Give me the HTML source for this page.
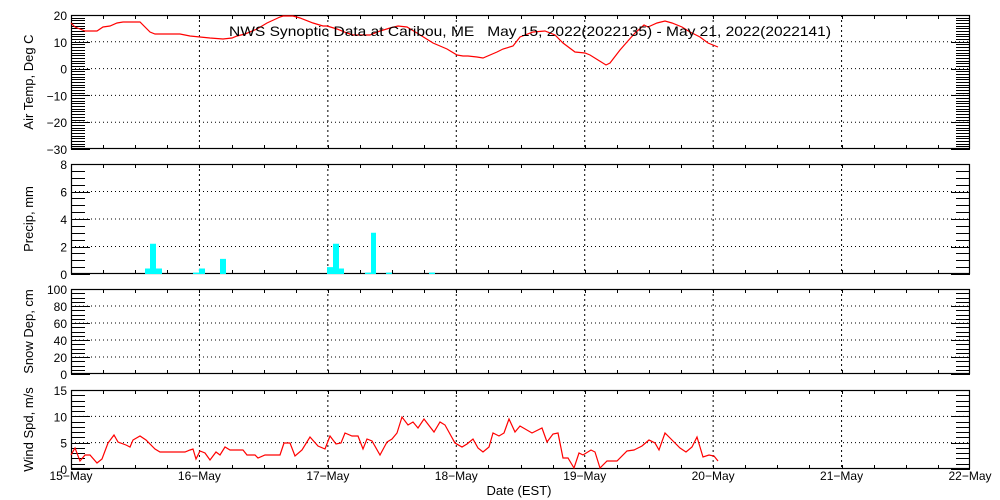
<!DOCTYPE html>
<html><head><meta charset="utf-8"><style>
html,body{margin:0;padding:0;background:#fff;width:1000px;height:500px;overflow:hidden}
svg{display:block;font-family:"Liberation Sans",sans-serif}
</style></head><body>
<svg id="s" width="1000" height="500" viewBox="0 0 1000 500" xmlns="http://www.w3.org/2000/svg">
<rect width="1000" height="500" fill="#fff"/>
<g id="g"></g>
<text x="229" y="36" font-size="14" textLength="602" lengthAdjust="spacingAndGlyphs">NWS Synoptic Data at Caribou, ME&#160;&#160;&#160;May 15, 2022(2022135) - May 21, 2022(2022141)</text>
</svg>
<script>
const NS="http://www.w3.org/2000/svg",g=document.getElementById('g');
function el(t,a,txt){const e=document.createElementNS(NS,t);for(const k in a)e.setAttribute(k,a[k]);if(txt!==undefined)e.textContent=txt;g.appendChild(e);return e;}
const L=71,R=970,DW=(R-L)/7;
const panels=[
 {top:15,bot:149,min:-30,max:20,maj:10,minr:1,title:"Air Temp, Deg C",labs:[-30,-20,-10,0,10,20]},
 {top:164,bot:274,min:0,max:8,maj:2,minr:0.5,title:"Precip, mm",labs:[0,2,4,6,8]},
 {top:289,bot:374,min:0,max:100,maj:20,minr:5,title:"Snow Dep, cm",labs:[0,20,40,60,80,100]},
 {top:390,bot:469,min:0,max:15,maj:5,minr:1,title:"Wind Spd, m/s",labs:[0,5,10,15]}
];
panels.forEach(p=>{
 const Y=v=>p.bot-(v-p.min)/(p.max-p.min)*(p.bot-p.top);
 for(let d=1;d<7;d++){const x=L+d*DW;el('line',{x1:x,x2:x,y1:p.top,y2:p.bot,stroke:'#000','stroke-width':1,'stroke-dasharray':'2,3'});}
 p.labs.forEach(v=>{if(v>p.min&&v<p.max){const y=Y(v);el('line',{x1:L,x2:R,y1:y,y2:y,stroke:'#000','stroke-width':1,'stroke-dasharray':'1,3'});}});
 for(let v=p.min;v<=p.max+1e-9;v+=p.minr){const y=Math.round(Y(v))+0.5;
  const isMaj=Math.abs(v/p.maj-Math.round(v/p.maj))<1e-6;
  const len=isMaj?19:14;
  el('line',{x1:L,x2:L+len,y1:y,y2:y,stroke:'#000','stroke-width':1});
  el('line',{x1:R-len,x2:R,y1:y,y2:y,stroke:'#000','stroke-width':1});}
 for(let i=1;i<28;i++){const x=Math.round(L+i*DW/4)+0.5;el('line',{x1:x,x2:x,y1:p.top,y2:p.top+4,stroke:'#000'});el('line',{x1:x,x2:x,y1:p.bot-4,y2:p.bot,stroke:'#000'});}
 el('rect',{x:L+0.5,y:p.top+0.5,width:R-L-1,height:p.bot-p.top-1,fill:'none',stroke:'#000','stroke-width':1.2});
 p.labs.forEach(v=>{el('text',{x:67,y:Y(v)+5,'font-size':12,'text-anchor':'end'},(v<0?'\u2212'+(-v):''+v));});
 const cy=(p.top+p.bot)/2;
 el('text',{x:0,y:0,'font-size':13,'text-anchor':'middle',transform:`translate(33,${cy}) rotate(-90)`},p.title);
});
const PB=274,PS=13.75;
[[145,150,0.4],[150,156,2.2],[156,162,0.4],[193,199,0.1],[199,205,0.4],[220,226,1.1],[327,333,0.5],[333,339,2.2],[339,344,0.4],[365,371,0.1],[371,376,3.0],[386,392,0.1],[429,435,0.1]].forEach(b=>{
 el('rect',{x:b[0],y:PB-b[2]*PS,width:b[1]-b[0],height:b[2]*PS,fill:'#00ffff'});});
const tp=[[71,23],[75,27],[85,31],[97,31],[103,27],[110,26],[117,23],[123,22],[140,22],[150,32],[155,34],[180,34],[190,36],[200,37],[210,38],[223,39],[232,38],[237,36],[245,34],[257,29],[267,23],[280,17],[283,16],[293,16],[300,18],[313,23],[323,26],[327,26],[337,29],[347,33],[353,35],[370,35],[380,31],[390,28],[398,26],[407,27],[417,33],[433,43],[447,49],[457,55],[463,56],[468,56],[477,57],[483,58],[497,52],[503,49],[513,46],[520,37],[533,32],[545,31],[555,35],[563,43],[575,52],[585,53],[590,55],[598,60],[606,65],[610,63],[620,50],[627,42],[635,33],[644,25],[648,27],[657,23],[665,21],[672,23],[682,27],[690,32],[700,37],[708,43],[718,47]];
el('polyline',{points:tp.map(p=>p.join(',')).join(' '),fill:'none',stroke:'#ff0000','stroke-width':1.2});
const wp=[[71,455],[75,448],[80,461],[85,455],[90,455],[97,463],[102,459],[108,443],[114,435],[118,442],[126,445],[130,447],[133,440],[140,436],[146,440],[155,449],[160,452],[185,452],[190,450],[193,449],[196,459],[200,451],[205,453],[210,460],[216,452],[220,455],[225,447],[230,450],[243,450],[247,455],[255,455],[258,458],[265,455],[280,455],[284,443],[290,443],[295,456],[302,450],[310,437],[318,446],[325,449],[330,436],[336,444],[341,443],[345,433],[352,436],[358,436],[363,449],[367,439],[372,441],[380,455],[387,442],[392,439],[397,433],[402,417],[408,425],[413,422],[418,428],[424,419],[434,432],[440,422],[445,425],[455,443],[462,447],[467,444],[473,439],[478,448],[483,452],[489,447],[493,433],[499,436],[504,433],[509,419],[515,432],[520,426],[532,433],[542,428],[547,442],[553,434],[558,433],[563,458],[568,458],[574,468],[579,453],[583,455],[591,450],[595,452],[600,468],[607,461],[617,461],[627,451],[634,450],[642,446],[649,440],[655,443],[659,450],[665,433],[672,440],[680,448],[686,452],[692,447],[697,437],[703,457],[709,455],[714,456],[718,461]];
el('polyline',{points:wp.map(p=>p.join(',')).join(' '),fill:'none',stroke:'#ff0000','stroke-width':1.2});
['15-May','16-May','17-May','18-May','19-May','20-May','21-May','22-May'].forEach((t,i)=>{el('text',{x:L+i*DW,y:480,'font-size':12,'text-anchor':'middle'},t.replace('-','\u2212'));});
el('text',{x:519,y:495,'font-size':13,'text-anchor':'middle'},'Date (EST)');
</script>
</body></html>
